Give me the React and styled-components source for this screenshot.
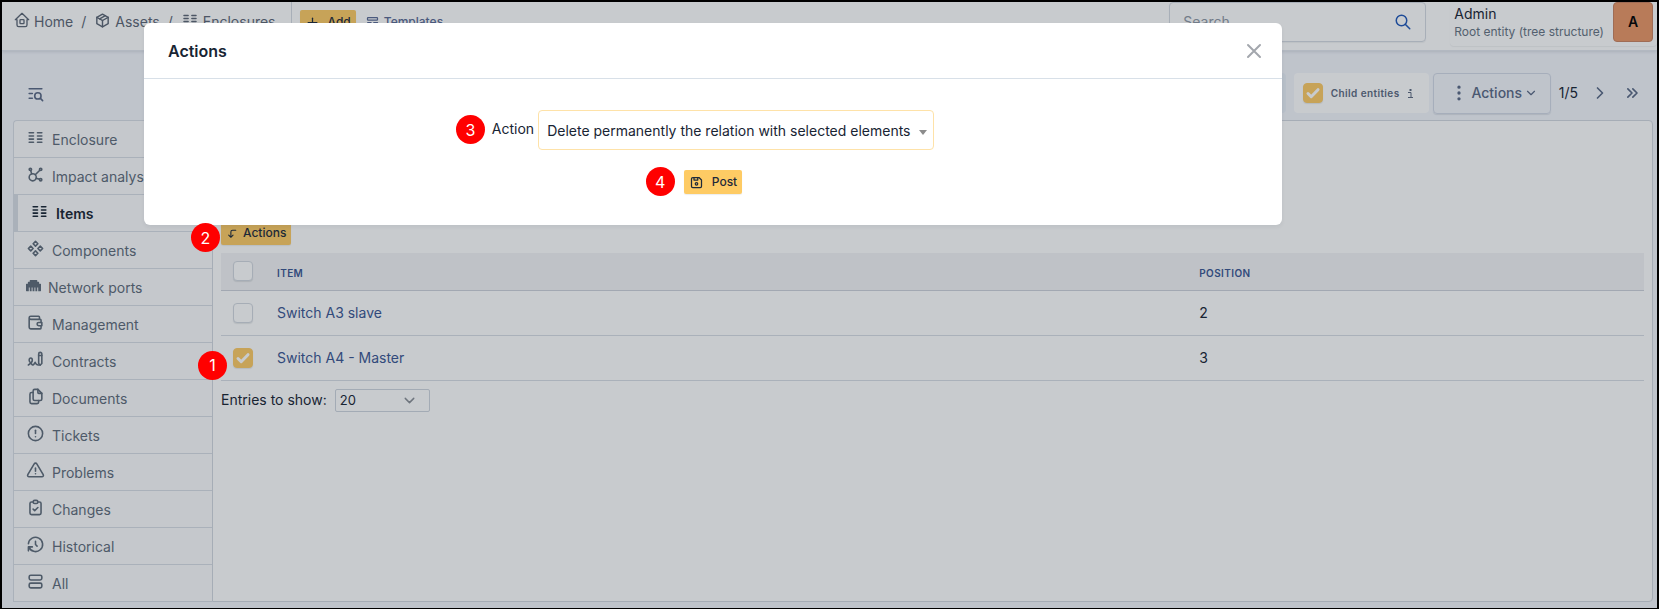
import React from "react";
import styled, { createGlobalStyle, css } from "styled-components";
import {
  TbColumns, TbPackage, TbPlus, TbTemplate, TbSearch, TbListSearch, TbAffiliate, TbComponents,
  TbWallet, TbWritingSign, TbFiles, TbAlertCircle, TbAlertTriangle, TbClipboardCheck, TbHistory,
  TbLayoutList, TbCornerLeftDown, TbDeviceFloppy, TbChevronDown, TbChevronRight, TbChevronsRight,
  TbDotsVertical,
} from "react-icons/tb";
import { FaEthernet } from "react-icons/fa";

const GlobalStyle = createGlobalStyle`
  *, *::before, *::after { box-sizing: border-box; }
  body { margin: 0; font: 400 14px/20px Inter, "Liberation Sans", sans-serif; color: #182433; }
  button, input, select { font: inherit; color: inherit; margin: 0; }
  button { cursor: pointer; }
  a { color: inherit; text-decoration: none; }
  svg { flex: none; display: block; }
`;

const Frame = styled.div`
  position: relative;
  min-height: 100vh;
  border: 2px solid #000;
  background: #f3f6fc;
  display: flex;
  flex-direction: column;
`;

const TopBar = styled.header`
  height: 49px;
  display: flex;
  background: #fff;
  border-bottom: 1px solid #e3e6ee;
  box-shadow: 0 1px 3px rgba(24, 36, 51, 0.12);
`;

const Crumbs = styled.nav`
  display: flex;
  align-items: center;
  padding: 0 15px 8px 12px;
  border-right: 1px solid #d5dae2;
  color: #5c6675;
`;

const Crumb = styled.a`
  display: flex;
  align-items: center;
  gap: 4px;
  svg { margin-bottom: 4px; }
`;

const Slash = styled.span`
  padding: 0 8px;
`;

const TopActions = styled.div`
  display: flex;
  align-items: center;
  gap: 4px;
  padding: 0 0 8px 8px;
`;

const SmallButton = styled.button`
  position: relative;
  display: inline-flex;
  align-items: center;
  gap: ${(p) => p.$gap || 8}px;
  height: 24px;
  padding: 0 5px;
  border: 0;
  border-radius: 2px;
  font-size: 12px;
  font-weight: 500;
  line-height: 16px;
  color: ${(p) => (p.$ghost ? "#5a6a95" : "#1e2a3a")};
  background: ${(p) => (p.$ghost ? "transparent" : "#fecb64")};
  box-shadow: ${(p) => (p.$ghost ? "none" : "0 1px 1px rgba(24, 36, 51, 0.08)")};
`;

const SearchBox = styled.label`
  display: flex;
  align-items: center;
  width: 257px;
  height: 40px;
  margin-left: auto;
  padding: 0 13px;
  border: 1px solid #d5dae2;
  border-radius: 4px;
  box-shadow: 0 1px 1px rgba(24, 36, 51, 0.06);
  color: #1f57b8;
  input {
    flex: 1;
    min-width: 0;
    border: 0;
    padding: 0;
    outline: 0;
    background: none;
    color: #182433;
  }
  input::placeholder { color: #8f98a5; opacity: 1; }
`;

const UserMenu = styled.button`
  display: flex;
  gap: 9px;
  height: 44px;
  margin-left: 24px;
  padding: 0 4px;
  border: 0;
  border-radius: 4px;
  background: none;
  text-align: left;
  box-shadow: 0 1px 1px rgba(24, 36, 51, 0.06);
`;

const UserText = styled.span`
  display: flex;
  flex-direction: column;
  padding-top: 2px;
  small { font-size: 12px; line-height: 16px; color: #667382; }
`;

const Avatar = styled.span`
  display: grid;
  place-items: center;
  width: 40px;
  height: 40px;
  border: 1px solid #c98360;
  border-radius: 4px;
  background: #ea9666;
  color: #000;
  font-weight: 600;
`;

const ToolRow = styled.div`
  display: flex;
  align-items: center;
  height: 69px;
  padding: 15px 5px 0 24px;
  color: #5a6885;
`;

const IconButton = styled.button`
  display: grid;
  place-items: center;
  width: ${(p) => p.$w}px;
  height: 24px;
  padding: 0;
  border: 0;
  background: none;
`;

const ToolGroup = styled.div`
  display: flex;
  align-items: center;
  margin-left: auto;
`;

const GroupEnd = styled.span`
  width: 40px;
  height: 40px;
  margin-right: 8px;
  border-radius: 4px;
  background: #e9eff7;
`;

const ChildToggle = styled.label`
  display: flex;
  align-items: center;
  gap: 8px;
  width: 135px;
  height: 40px;
  margin-right: 4px;
  padding-left: 9px;
  border-radius: 4px;
  background: #fff;
  font-size: 10px;
  font-weight: 600;
  letter-spacing: 0.04em;
  color: #5c6980;
`;

const checkedBox = css`
  border-color: #fecb64;
  background: #fecb64;
`;

const CheckWrap = styled.span`
  position: relative;
  display: block;
  width: 20px;
  height: 20px;
  svg { position: absolute; inset: 0; pointer-events: none; }
`;

const CheckInput = styled.input`
  appearance: none;
  display: block;
  width: 20px;
  height: 20px;
  border: 1px solid #d3d8e0;
  border-radius: 4px;
  background: #fff;
  box-shadow: 0 1px 1px rgba(24, 36, 51, 0.1);
  &:checked { ${checkedBox} }
`;

const ActionsButton = styled.button`
  display: flex;
  align-items: center;
  justify-content: center;
  gap: 2px;
  width: 118px;
  height: 41px;
  padding: 0 4px 0 8px;
  border: 1px solid #d3d9e6;
  border-radius: 4px;
  background: none;
  font-weight: 500;
  box-shadow: 0 1px 1px rgba(24, 36, 51, 0.1);
`;

const PageCount = styled.span`
  padding: 0 10px 0 8px;
  color: #182433;
`;

const Body = styled.div`
  display: flex;
  flex: 1;
  padding: 0 4px 6px 11px;
`;

const Tabs = styled.nav`
  width: 199px;
  flex: none;
  border: 1px solid #d8dde5;
  border-right: 0;
  border-radius: 4px 0 0 0;
  background: #fbfcfd;
`;

const Tab = styled.a`
  display: flex;
  align-items: center;
  gap: 7px;
  height: 37px;
  padding: 1px 0 0 12px;
  border-bottom: 1px solid #d8dde5;
  color: #5f6b7a;
  svg { margin-bottom: 4px; }
  &:last-child { border-bottom: 0; height: 36px; }
  ${(p) => p.$active && css`
    border-left: 4px solid #d8dde5;
    color: #182433;
    font-weight: 600;
  `}
`;

const Panel = styled.main`
  flex: 1;
  min-width: 0;
  padding: 100px 8px 0;
  border: 1px solid #d3d8e0;
  border-radius: 0 4px 4px 0;
  background: #fff;
`;

const Table = styled.table`
  width: 100%;
  margin-top: 8px;
  table-layout: fixed;
  border-collapse: collapse;
  th, td { padding: 0 12px; text-align: left; border-bottom: 1px solid #d8dde5; }
  th {
    height: 37px;
    background: #f3f3f6;
    font-size: 10px;
    font-weight: 600;
    line-height: 16px;
    letter-spacing: 0.04em;
    text-transform: uppercase;
    color: #3a5693;
    border-bottom-color: #cdd2da;
    padding-top: 4px;
  }
  th:first-child { padding-top: 0; }
  td { height: 45px; }
  td a { color: #3a5693; }
`;

const CheckCol = styled.col`
  width: 44px;
`;

const PositionCol = styled.col`
  width: 32.1%;
`;

const CheckCell = styled.div`
  position: relative;
`;

const Entries = styled.div`
  display: flex;
  align-items: center;
  gap: 8px;
  margin-top: 8px;
`;

const SelectWrap = styled.span`
  position: relative;
  display: block;
  svg {
    position: absolute;
    right: ${(p) => p.$inset}px;
    top: 0;
    height: 100%;
    pointer-events: none;
    color: #8a8f96;
  }
`;

const SizeSelect = styled.select`
  appearance: none;
  display: block;
  width: 95px;
  height: 23px;
  padding: 0 4px;
  border: 1px solid #cfd5de;
  border-radius: 2px;
  background: #fff;
  font-size: 13px;
`;

const Badge = styled.span`
  position: absolute;
  z-index: 5;
  right: calc(100% + ${(p) => p.$gap}px);
  top: 50%;
  margin-top: ${(p) => p.$drop || -15}px;
  display: grid;
  place-items: center;
  width: 29px;
  height: 29px;
  border-radius: 50%;
  background: #f00;
  color: #fff;
  font-size: 16px;
  font-weight: 400;
  line-height: 20px;
`;

const Backdrop = styled.div`
  position: absolute;
  inset: 0;
  z-index: 3;
  padding: 21px 20px 0 142px;
  background: rgba(24, 36, 51, 0.24);
`;

const Modal = styled.section`
  max-width: 1138px;
  border-radius: 6px;
  background: #fff;
  box-shadow: 0 2px 4px rgba(24, 36, 51, 0.06);
`;

const ModalHead = styled.div`
  display: flex;
  align-items: center;
  justify-content: space-between;
  height: 56px;
  padding: 0 16px 0 24px;
  border-bottom: 1px solid #d8e0e8;
  h2 { margin: 0; font-size: 16px; font-weight: 600; line-height: 24px; }
`;

const ModalBody = styled.form`
  display: flex;
  flex-direction: column;
  align-items: center;
  gap: 20px;
  padding: 31px 24px;
`;

const Field = styled.div`
  position: relative;
  display: flex;
  align-items: center;
  gap: 4px;
  label { padding-bottom: 2px; }
`;

const ActionSelect = styled.select`
  appearance: none;
  display: block;
  width: 396px;
  height: 40px;
  padding: 2px 8px 0;
  border: 1px solid #fee2a8;
  border-radius: 4px;
  background: #fff;
`;

const HomeIcon = () => (
  <svg width="16" height="16" viewBox="0 0 24 24" fill="none" stroke="currentColor" strokeWidth="2" strokeLinecap="round" strokeLinejoin="round">
    <path d="M4.500 11.500H2L12 2l10 9.500h-2.500V19.500a2.500 2.500 0 0 1-2.500 2.500H7a2.500 2.500 0 0 1-2.500-2.500z" />
    <rect x="9" y="11.500" width="6" height="6" rx="1" />
  </svg>
);

const InfoIcon = () => (
  <svg width="5" height="9" viewBox="0 0 5 9" fill="none" stroke="currentColor">
    <path d="M2.500 0v2" strokeWidth="2" />
    <path d="M0 3.500h3v5M0 8.500h5" strokeWidth="1" />
  </svg>
);

const Check = ({ label, ...rest }) => (
  <CheckWrap>
    <CheckInput type="checkbox" aria-label={label} {...rest} />
    {rest.defaultChecked && (
      <svg width="20" height="20" viewBox="0 0 20 20" fill="none" stroke="#fff" strokeWidth="3" strokeLinecap="round" strokeLinejoin="round">
        <path d="M5 10.500l3.200 3.200 6.800-7" />
      </svg>
    )}
  </CheckWrap>
);

const TABS = [
  ["Enclosure", TbColumns],
  ["Impact analysis", TbAffiliate],
  ["Items", TbColumns],
  ["Components", TbComponents],
  ["Network ports", FaEthernet],
  ["Management", TbWallet],
  ["Contracts", TbWritingSign],
  ["Documents", TbFiles],
  ["Tickets", TbAlertCircle],
  ["Problems", TbAlertTriangle],
  ["Changes", TbClipboardCheck],
  ["Historical", TbHistory],
  ["All", TbLayoutList],
];

const ROWS = [
  { name: "Switch A3 slave", position: 2 },
  { name: "Switch A4 - Master", position: 3, selected: true, step: 1 },
];

export default function App() {
  return (
    <Frame>
      <GlobalStyle />
      <TopBar>
        <Crumbs>
          <Crumb href="#home"><HomeIcon />Home</Crumb>
          <Slash>/</Slash>
          <Crumb href="#assets"><TbPackage size={17} />Assets</Crumb>
          <Slash>/</Slash>
          <Crumb href="#enclosures"><TbColumns size={18} />Enclosures</Crumb>
        </Crumbs>
        <TopActions>
          <SmallButton type="button"><TbPlus size={15} />Add</SmallButton>
          <SmallButton type="button" $ghost $gap={4}><TbTemplate size={15} />Templates</SmallButton>
        </TopActions>
        <SearchBox>
          <input type="text" placeholder="Search" aria-label="Search" />
          <TbSearch size={18} />
        </SearchBox>
        <UserMenu type="button">
          <UserText>Admin<small>Root entity (tree structure)</small></UserText>
          <Avatar>A</Avatar>
        </UserMenu>
      </TopBar>

      <ToolRow>
        <IconButton type="button" $w={18} aria-label="Search in list"><TbListSearch size={19} /></IconButton>
        <ToolGroup>
          <GroupEnd />
          <ChildToggle>
            <Check defaultChecked />
            Child entities
            <InfoIcon />
          </ChildToggle>
          <ActionsButton type="button">
            <TbDotsVertical size={20} />
            Actions
            <TbChevronDown size={14} />
          </ActionsButton>
          <PageCount>1/5</PageCount>
          <IconButton type="button" $w={24} aria-label="Next"><TbChevronRight size={20} /></IconButton>
          <IconButton type="button" $w={40} aria-label="Last"><TbChevronsRight size={20} /></IconButton>
        </ToolGroup>
      </ToolRow>

      <Body>
        <Tabs>
          {TABS.map(([name, Icon]) => (
            <Tab key={name} href={"#" + name} $active={name === "Items"}>
              <Icon size={Icon === FaEthernet ? 15 : 19} />
              {name}
            </Tab>
          ))}
        </Tabs>
        <Panel>
          <SmallButton type="button" $gap={4}>
            <Badge $gap={1} $drop={-10}>2</Badge>
            <TbCornerLeftDown size={13} />Actions
          </SmallButton>
          <Table>
            <colgroup><CheckCol /><col /><PositionCol /></colgroup>
            <thead>
              <tr><th><Check label="Select all" /></th><th>Item</th><th>Position</th></tr>
            </thead>
            <tbody>
              {ROWS.map((r) => (
                <tr key={r.name}>
                  <td>
                    <CheckCell>
                      {r.step && <Badge $gap={6} $drop={-7}>{r.step}</Badge>}
                      <Check label={r.name} defaultChecked={r.selected} />
                    </CheckCell>
                  </td>
                  <td><a href={"#" + r.position}>{r.name}</a></td>
                  <td>{r.position}</td>
                </tr>
              ))}
            </tbody>
          </Table>
          <Entries>
            <label htmlFor="page-size">Entries to show:</label>
            <SelectWrap $inset={12}>
              <SizeSelect id="page-size"><option>20</option></SizeSelect>
              <TbChevronDown size={17} />
            </SelectWrap>
          </Entries>
        </Panel>
      </Body>

      <Backdrop>
        <Modal role="dialog" aria-labelledby="modal-title">
          <ModalHead>
            <h2 id="modal-title">Actions</h2>
            <IconButton type="button" $w={24} aria-label="Close">
              <svg width="16" height="16" viewBox="0 0 16 16" stroke="#a3a7ad" strokeWidth="2" strokeLinecap="round">
                <path d="M2 2l12 12M14 2L2 14" />
              </svg>
            </IconButton>
          </ModalHead>
          <ModalBody>
            <Field>
              <Badge $gap={7}>3</Badge>
              <label htmlFor="mass-action">Action</label>
              <SelectWrap $inset={7}>
                <ActionSelect id="mass-action">
                  <option>Delete permanently the relation with selected elements</option>
                </ActionSelect>
                <svg width="8" height="40" viewBox="0 0 8 40"><path d="M0 20h8l-4 5z" fill="#8c8c8c" /></svg>
              </SelectWrap>
            </Field>
            <SmallButton type="button">
              <Badge $gap={9}>4</Badge>
              <TbDeviceFloppy size={15} />Post
            </SmallButton>
          </ModalBody>
        </Modal>
      </Backdrop>
    </Frame>
  );
}
